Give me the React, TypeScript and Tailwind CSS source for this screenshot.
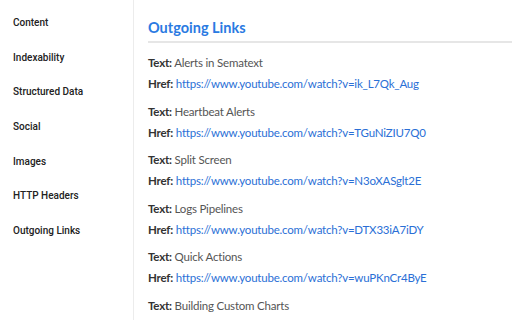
import React from "react";

const navItems = [
  "Content",
  "Indexability",
  "Structured Data",
  "Social",
  "Images",
  "HTTP Headers",
  "Outgoing Links",
];

const links = [
  { text: "Alerts in Sematext", href: "https://www.youtube.com/watch?v=ik_L7Qk_Aug" },
  { text: "Heartbeat Alerts", href: "https://www.youtube.com/watch?v=TGuNiZIU7Q0" },
  { text: "Split Screen", href: "https://www.youtube.com/watch?v=N3oXASglt2E" },
  { text: "Logs Pipelines", href: "https://www.youtube.com/watch?v=DTX33iA7iDY" },
  { text: "Quick Actions", href: "https://www.youtube.com/watch?v=wuPKnCr4ByE" },
  { text: "Building Custom Charts", href: "" },
];

export default function App() {
  return (
    <div className="flex w-[512px] h-[320px] overflow-hidden bg-white">
      {/* sidebar */}
      <div className="w-[134px] shrink-0 border-r border-[#ececec] pt-[17px] pl-[13px] font-['Roboto',Arial,sans-serif]">
        {navItems.map((item) => (
          <div key={item} className="h-[34.7px] text-[10px] font-medium text-[#222] leading-[12px]">
            {item}
          </div>
        ))}
      </div>

      {/* main */}
      <div className="flex-1 pl-[14px] pt-[19px] font-['Lato',sans-serif]">
        <h2 className="text-[14.5px] font-bold text-[#2a7ae2] leading-[18px] pb-[4px] border-b-2 border-[#e6e6e6]">
          Outgoing Links
        </h2>
        <div className="pt-[12px] flex flex-col gap-[11.5px]">
          {links.map((l) => (
            <div key={l.text} className="flex flex-col gap-[5px] text-[11.5px] leading-[16px] tracking-[-0.2px]">
              <div className="text-[#555]">
                <span className="font-bold text-[#333]">Text:</span> {l.text}
              </div>
              {l.href && (
                <div>
                  <span className="font-bold text-[#333]">Href:</span>{" "}
                  <a className="text-[#2a6fd6]" href="#">
                    {l.href}
                  </a>
                </div>
              )}
            </div>
          ))}
        </div>
      </div>
    </div>
  );
}
